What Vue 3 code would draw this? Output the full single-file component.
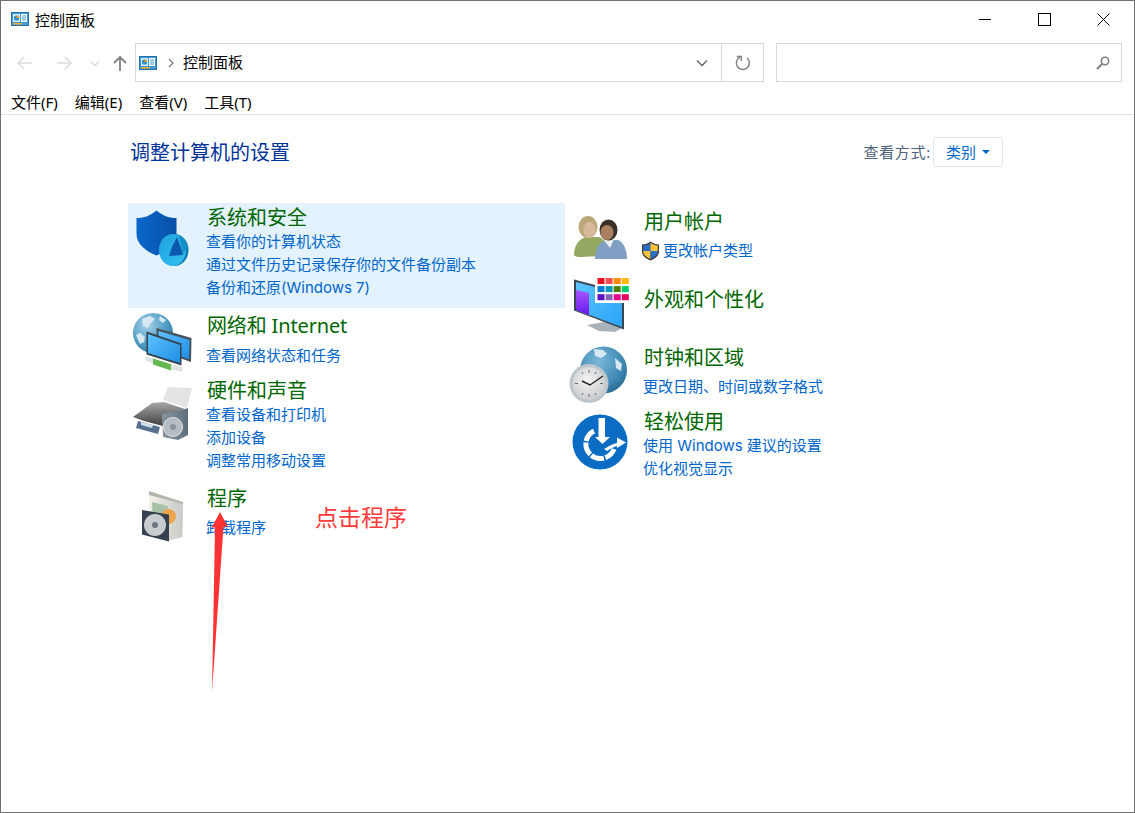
<template>
  <div class="window">
    <header class="titlebar">
      <svg class="panel-icon" width="18" height="14" viewBox="0 0 18 14">
        <rect x="0.5" y="0.5" width="17" height="13" fill="#3f9ad8" stroke="#2a6fa8" />
        <rect x="2" y="2" width="7" height="8" fill="#cfeafb" />
        <circle cx="5.5" cy="6" r="2.6" fill="#2f8fd0" />
        <path d="M5.5 6V3.4A2.6 2.6 0 0 1 8.1 6Z" fill="#f59b23" />
        <rect x="10" y="2" width="6" height="8" fill="#fff" />
        <path d="M11 4h4M11 6h4M11 8h4" stroke="#3f9ad8" />
        <rect x="2" y="11" width="9" height="1.5" fill="#f7a823" />
      </svg>
      <span class="title-text">控制面板</span>
      <div class="win-buttons">
        <svg width="60" height="14" viewBox="0 0 60 14"><path d="M1 6.5h12" stroke="#000" /></svg>
        <svg width="59" height="14" viewBox="0 0 59 14"><rect x="0.5" y="0.5" width="12" height="12" fill="none" stroke="#000" /></svg>
        <svg width="13" height="14" viewBox="0 0 13 14"><path d="M0.5 0.5l12 12M12.5 0.5l-12 12" stroke="#000" /></svg>
      </div>
    </header>

    <nav class="navbar">
      <div class="nav-buttons">
        <svg width="118" height="20" viewBox="0 0 118 20">
          <path d="M2 10h14M8 4l-6 6 6 6" fill="none" stroke="#dcdcdc" stroke-width="1.6" />
          <path d="M41 10h14M49 4l6 6-6 6" fill="none" stroke="#dcdcdc" stroke-width="1.6" />
          <path d="M75 8.5l4 4 4-4" fill="none" stroke="#dcdcdc" stroke-width="1.6" />
          <path d="M104 18V4M98 10l6-6 6 6" fill="none" stroke="#808080" stroke-width="1.8" />
        </svg>
      </div>
      <div class="address">
        <svg class="panel-icon small" width="18" height="14" viewBox="0 0 18 14">
          <rect x="0.5" y="0.5" width="17" height="13" fill="#3f9ad8" stroke="#2a6fa8" />
          <rect x="2" y="2" width="7" height="8" fill="#cfeafb" />
          <circle cx="5.5" cy="6" r="2.6" fill="#2f8fd0" />
          <path d="M5.5 6V3.4A2.6 2.6 0 0 1 8.1 6Z" fill="#f59b23" />
          <rect x="10" y="2" width="6" height="8" fill="#fff" />
          <path d="M11 4h4M11 6h4M11 8h4" stroke="#3f9ad8" />
          <rect x="2" y="11" width="9" height="1.5" fill="#f7a823" />
        </svg>
        <svg class="crumb" width="6" height="10" viewBox="0 0 6 10"><path d="M1 1l4 4-4 4" fill="none" stroke="#808080" stroke-width="1.4" /></svg>
        <span class="address-text">控制面板</span>
        <svg class="drop" width="12" height="8" viewBox="0 0 12 8"><path d="M1 1.5l5 5 5-5" fill="none" stroke="#707070" stroke-width="1.6" /></svg>
        <div class="refresh">
          <svg width="16" height="16" viewBox="0 0 16 16">
            <path d="M5 2.2A6.5 6.5 0 1 0 12 3" fill="none" stroke="#808080" stroke-width="1.5" />
            <path d="M1.8 1.5H6.3V6" fill="none" stroke="#808080" stroke-width="1.4" />
          </svg>
        </div>
      </div>
      <div class="search">
        <svg width="14" height="14" viewBox="0 0 14 14">
          <circle cx="9" cy="5" r="3.7" fill="none" stroke="#808080" stroke-width="1.6" />
          <path d="M6.3 7.7L1 13" stroke="#808080" stroke-width="2" />
        </svg>
      </div>
    </nav>

    <div class="menubar">
      <span v-for="m in menus" :key="m">{{ m }}</span>
    </div>

    <main class="content">
      <div class="head">
        <h1>调整计算机的设置</h1>
        <div class="view-by">
          <span class="view-label">查看方式:</span>
          <div class="view-btn">类别<i class="caret"></i></div>
        </div>
      </div>

      <div class="columns">
        <div v-for="(col, i) in columns" :key="i" class="col" :class="i ? 'right' : 'left'">
          <section v-for="cat in col" :key="cat.title" class="cat" :class="[cat.cls, { single: cat.links.length === 1 }]">
            <div class="icon-cell">
              <svg v-if="cat.icon === 'shield'" width="64" height="64" viewBox="132 206 64 64">
                <defs>
                  <linearGradient id="sh" x1="0" y1="0" x2="1" y2="0"><stop offset="0" stop-color="#0a66cc" /><stop offset="1" stop-color="#0851a6" /></linearGradient>
                  <linearGradient id="disc" x1="0" y1="0" x2="1" y2="1"><stop offset="0" stop-color="#1f9fe0" /><stop offset="1" stop-color="#35c3ee" /></linearGradient>
                </defs>
                <path d="M136.500 218c8 0 14-2.500 20-7.500 6 5 12 7.500 20 7.500v16c0 10-9 17-20 21.500-11-4.500-20-11.500-20-21.500Z" fill="url(#sh)" />
                <ellipse cx="174.500" cy="250" rx="14" ry="16" fill="#0c7ab2" />
                <ellipse cx="172.500" cy="250" rx="13.500" ry="16" fill="url(#disc)" />
                <path d="M177 237l4 11 2 7-14 1 3-9Z" fill="#0c58ac" />
                <path d="M179 235c4 2 8 7 8 13l-4 6Z" fill="#1490c8" />
              </svg>

              <svg v-else-if="cat.icon === 'network'" width="64" height="64" viewBox="130 311 64 64">
                <defs>
                  <radialGradient id="gl" cx="0.35" cy="0.3" r="0.8"><stop offset="0" stop-color="#a5d2e8" /><stop offset="0.6" stop-color="#4f9cc4" /><stop offset="1" stop-color="#2b6f98" /></radialGradient>
                  <linearGradient id="scr" x1="0" y1="0" x2="1" y2="1"><stop offset="0" stop-color="#5cc2ff" /><stop offset="1" stop-color="#1f8fe6" /></linearGradient>
                </defs>
                <circle cx="153" cy="333" r="20" fill="url(#gl)" />
                <path d="M142 319l8-3 5 3-4 4-3 5-5-2ZM160 316l6 4-3 3-4-3ZM136 335l4-2 5 4-1 5-4 2Z" fill="#d6e8f1" />
                <path d="M156.500 328l35 10-.5 24-34-12Z" fill="#46525c" />
                <path d="M158.500 331l31 9-.5 19-30-10Z" fill="url(#scr)" />
                <path d="M146.500 331.500l35 12v22l-35-11Z" fill="#36424c" />
                <path d="M148 334l32 11v18l-32-10Z" fill="url(#scr)" />
                <path d="M145 356l13 4 0 5-12-4Z" fill="#dfe5e2" />
                <path d="M153 358.500l19 6-1 6-18-6Z" fill="#63b84f" />
                <path d="M171 364l12 3-1 5-11-3Z" fill="#dfe5e2" />
              </svg>

              <svg v-else-if="cat.icon === 'printer'" width="64" height="64" viewBox="130 383 64 64">
                <defs>
                  <linearGradient id="pr" x1="0" y1="0" x2="0" y2="1"><stop offset="0" stop-color="#a8a8a8" /><stop offset="1" stop-color="#2e2e2e" /></linearGradient>
                  <linearGradient id="spk" x1="0" y1="0" x2="1" y2="0"><stop offset="0" stop-color="#8a97a3" /><stop offset="1" stop-color="#5d6d7b" /></linearGradient>
                </defs>
                <path d="M163 400l5-13 24 1-5 20Z" fill="#e4e4e4" />
                <path d="M133 417l19-14 12-1 24 8-10 20-34-9Z" fill="url(#pr)" />
                <path d="M138 421l22 6-2 7-22-6Z" fill="#56708e" />
                <path d="M141 422l12 3-1 3-11-3Z" fill="#cde0ea" />
                <path d="M162 414l15-2 11-4 0 27-10 5-15-3Z" fill="url(#spk)" />
                <circle cx="173" cy="427" r="9.500" fill="#b5bcc2" stroke="#dfe3e6" />
                <circle cx="173" cy="427" r="3" fill="#8a949c" />
              </svg>

              <svg v-else-if="cat.icon === 'box'" width="64" height="64" viewBox="132 487 64 64">
                <defs>
                  <linearGradient id="bx" x1="0" y1="0" x2="1" y2="0"><stop offset="0" stop-color="#f2f2ea" /><stop offset="1" stop-color="#c9c9c6" /></linearGradient>
                </defs>
                <path d="M149 491l34 11v6l-34-9Z" fill="#b5b5ae" />
                <path d="M149 495l34 9-.5 33-16 4-17-8Z" fill="url(#bx)" />
                <path d="M152 502l16 4-2 18-13-4Z" fill="#a6c2a6" />
                <circle cx="168.500" cy="516.500" r="7.500" fill="#eda54c" />
                <path d="M142 510l27 4.500v27l-27-7Z" fill="#35424e" />
                <circle cx="155" cy="525" r="11" fill="#c8ccce" />
                <circle cx="155" cy="525" r="3" fill="#6c7880" />
              </svg>

              <svg v-else-if="cat.icon === 'users'" width="64" height="64" viewBox="570 212 64 64">
                <path d="M574 255c0-9 5-17 13-18h12c5 2 8 6 8 12l-8 7-18 1c-4 0-7-1-7-2Z" fill="#93a860" />
                <ellipse cx="588" cy="227" rx="9.500" ry="11" fill="#bba878" />
                <ellipse cx="589.500" cy="230" rx="6" ry="8" fill="#d8b99c" />
                <path d="M595 259c0-11 5-17 11-19h12c5 2 9 9 9 19Z" fill="#7f9fc4" />
                <path d="M603 239l6-3 5 3-4 9Z" fill="#edf0f2" />
                <ellipse cx="608.500" cy="230" rx="9" ry="10.500" fill="#3b3028" />
                <ellipse cx="607" cy="232.500" rx="6.500" ry="7.500" fill="#a8805f" />
              </svg>

              <svg v-else-if="cat.icon === 'display'" width="64" height="64" viewBox="570 274 64 64">
                <defs>
                  <linearGradient id="mon" x1="0" y1="0" x2="1" y2="1"><stop offset="0" stop-color="#5cc4ff" /><stop offset="1" stop-color="#2aa3f8" /></linearGradient>
                  <linearGradient id="pur" x1="0" y1="0" x2="0" y2="1"><stop offset="0" stop-color="#a656ff" /><stop offset="1" stop-color="#6a1ae8" /></linearGradient>
                </defs>
                <path d="M604 322h9l1 6-9-1Z" fill="#b8c0c6" />
                <path d="M587 325l17-3 20 5-9 5-16-1Z" fill="#a9b2b8" />
                <path d="M574 279.500l50 13v37l-50-19Z" fill="#3b4650" />
                <path d="M576 282l46 12v33l-46-17Z" fill="url(#mon)" />
                <path d="M576 290l13 3v22l-13-5Z" fill="url(#pur)" />
                <rect x="595" y="276" width="34" height="27" fill="#fff" />
                <rect v-for="t in tiles" :key="t.k" :x="t.x" :y="t.y" width="7" height="6" :fill="t.c" />
              </svg>

              <svg v-else-if="cat.icon === 'clock'" width="64" height="64" viewBox="568 345 64 64">
                <defs>
                  <radialGradient id="gl2" cx="0.4" cy="0.3" r="0.85"><stop offset="0" stop-color="#7ab8d8" /><stop offset="0.6" stop-color="#3f8ab5" /><stop offset="1" stop-color="#1f5b85" /></radialGradient>
                  <radialGradient id="face" cx="0.45" cy="0.4" r="0.7"><stop offset="0" stop-color="#f4f4f4" /><stop offset="1" stop-color="#c2c6c8" /></radialGradient>
                </defs>
                <circle cx="603.500" cy="370" r="23.500" fill="url(#gl2)" />
                <path d="M594 349l9 1 4 4-6 4-6-2ZM615 358l7 6-1 7-5-3Z" fill="#d6e8f1" />
                <circle cx="589" cy="383.500" r="19.500" fill="#bcc5ca" />
                <circle cx="589" cy="383.500" r="16.500" fill="url(#face)" />
                <path d="M589 370v3M589 394v3M575 383.500h3M600 383.500h3M582 372l1 2M596 372l-1 2M582 395l1-2M596 395l-1-2" stroke="#6b6b6b" />
                <path d="M603 376l-13 9-8-4" fill="none" stroke="#222" stroke-width="1.400" />
              </svg>

              <svg v-else-if="cat.icon === 'ease'" width="64" height="64" viewBox="568 412 64 64">
                <circle cx="600" cy="442" r="27.500" fill="#0b6cc4" />
                <path d="M594 431A14.500 14.500 0 1 0 614 449" fill="none" stroke="#fff" stroke-width="5" stroke-dasharray="13 1.500 13 1.500 13 1.500 13" />
                <path d="M598.500 418h6.500v19h5l-7.500 7-7.500-7h3.500Z" fill="#fff" />
                <path d="M604 449l2-1c3-2 6-4 11-5v-5.500l9 5-9 5.500v-2c-4 1-7 3-10 5Z" fill="#fff" />
              </svg>
            </div>

            <div class="text">
              <h2>{{ cat.title }}</h2>
              <div class="links">
                <a v-for="l in cat.links" :key="l">
                  <svg v-if="cat.uac" class="uac" width="19" height="20" viewBox="0 0 19 20">
                    <path d="M9.500 0.500c2.500 2 5 3 8.500 3v7c0 4-3.500 7-8.500 9-5-2-8.500-5-8.500-9v-7c3.500 0 6-1 8.500-3Z" fill="#3a3a3a" />
                    <path d="M9.500 2v8H2.200V4.500c3 0 5-1 7.300-2.500Z" fill="#2a6fc2" />
                    <path d="M9.500 2c2.300 1.500 4.300 2.500 7.300 2.500V10H9.500Z" fill="#f8c33b" />
                    <path d="M2.200 10h7.300v8c-4-1.500-7.300-4-7.300-8Z" fill="#f8c33b" />
                    <path d="M9.500 10h7.300c0 4-3.300 6.500-7.300 8Z" fill="#2a6fc2" />
                  </svg>
                  {{ l }}
                </a>
              </div>
            </div>
          </section>
        </div>
      </div>

      <span class="note">点击程序</span>
      <svg class="arrow" width="20" height="182" viewBox="0 0 20 182">
        <path d="M10 0L18 15 13.500 14.500 2 180 5 15 1.500 16Z" fill="#ff3333" />
      </svg>
    </main>
  </div>
</template>

<script setup>
const menus = ['文件(F)', '编辑(E)', '查看(V)', '工具(T)']

const tileColors = [
  '#e81123', '#ff4d4f', '#ff8c00', '#ffb900',
  '#0078d7', '#0099bc', '#498205', '#00cc6a',
  '#5c0fc4', '#8764b8', '#e3008c', '#e3005c'
]
const tiles = tileColors.map((c, i) => ({
  k: i,
  c,
  x: 597.5 + (i % 4) * 8.1,
  y: 278 + Math.floor(i / 4) * 8.1
}))

const columns = [
  [
    { icon: 'shield', title: '系统和安全', cls: 'active', links: ['查看你的计算机状态', '通过文件历史记录保存你的文件备份副本', '备份和还原(Windows 7)'] },
    { icon: 'network', title: '网络和 Internet', cls: 'net', links: ['查看网络状态和任务'] },
    { icon: 'printer', title: '硬件和声音', links: ['查看设备和打印机', '添加设备', '调整常用移动设置'] },
    { icon: 'box', title: '程序', cls: 'programs', links: ['卸载程序'] }
  ],
  [
    { icon: 'users', title: '用户帐户', uac: true, links: ['更改帐户类型'] },
    { icon: 'display', title: '外观和个性化', cls: 'appearance', links: [] },
    { icon: 'clock', title: '时钟和区域', links: ['更改日期、时间或数字格式'] },
    { icon: 'ease', title: '轻松使用', links: ['使用 Windows 建议的设置', '优化视觉显示'] }
  ]
]
</script>

<style>
html, body {
  margin: 0;
  background: #fff;
}
</style>

<style scoped>
.window {
  box-sizing: border-box;
  width: 1135px;
  height: 813px;
  border: 1px solid #707070;
  background: #fff;
  display: flex;
  flex-direction: column;
  font-family: "Noto Sans", "Noto Sans CJK SC", sans-serif;
  color: #000;
  overflow: hidden;
}

.titlebar {
  height: 42px;
  flex: none;
  display: flex;
  align-items: flex-start;
  padding-left: 10px;
}
.titlebar .panel-icon {
  margin-top: 11px;
}
.title-text {
  margin: 8px 0 0 6px;
  font-size: 15px;
  line-height: 22px;
}
.win-buttons {
  margin-left: auto;
  margin-right: 24px;
  padding-top: 12px;
  display: flex;
}

.navbar {
  height: 39px;
  flex: none;
  display: flex;
  align-items: stretch;
}
.nav-buttons {
  width: 134px;
  padding: 10px 0 0 15px;
  box-sizing: border-box;
}
.address {
  width: 629px;
  box-sizing: border-box;
  border: 1px solid #d9d9d9;
  display: flex;
  align-items: center;
  padding-left: 3px;
}
.crumb {
  margin-left: 11px;
}
.address-text {
  margin: -1px 0 0 9px;
  font-size: 15px;
  line-height: 22px;
}
.drop {
  margin-left: auto;
  margin-right: 13px;
}
.refresh {
  width: 41px;
  align-self: stretch;
  border-left: 1px solid #d9d9d9;
  display: flex;
  align-items: center;
  justify-content: center;
}
.search {
  width: 346px;
  margin-left: 12px;
  box-sizing: border-box;
  border: 1px solid #d9d9d9;
  display: flex;
  align-items: center;
  justify-content: flex-end;
  padding-right: 11px;
}

.menubar {
  height: 33px;
  flex: none;
  box-sizing: border-box;
  border-bottom: 1px solid #e0e0e0;
  display: flex;
  align-items: center;
  gap: 17px;
  padding: 9px 0 2px 10px;
  font-size: 15px;
  line-height: 20px;
}

.content {
  flex: 1;
  position: relative;
  padding: 22px 131px 0 127px;
}

.head {
  display: flex;
  justify-content: space-between;
  align-items: center;
  height: 30px;
  padding-left: 3px;
}
h1 {
  margin: 0;
  margin-left: -1px;
  padding-top: 2px;
  font-size: 20px;
  line-height: 30px;
  font-weight: 400;
  color: #003399;
}
.view-by {
  display: flex;
  align-items: center;
  gap: 2px;
  font-size: 15px;
  color: #4c607a;
}
.view-label {
  letter-spacing: 0.7px;
  padding-bottom: 2px;
}
.view-btn {
  box-sizing: border-box;
  width: 70px;
  height: 30px;
  border: 1px solid #dfe9f3;
  border-radius: 2px;
  display: flex;
  align-items: center;
  padding: 0 0 2px 12px;
  color: #0066cc;
}
.caret {
  margin: 2px 0 0 6px;
  border-left: 4px solid transparent;
  border-right: 4px solid transparent;
  border-top: 4px solid #0066cc;
}

.columns {
  display: flex;
  margin-top: 36px;
}
.col.left {
  width: 437px;
}

.cat {
  display: flex;
  margin-top: 4px;
  padding-bottom: 5px;
}
.left .cat:first-child {
  margin-top: 0;
}
.cat.active {
  background: #e3f2fd;
  padding-bottom: 9px;
}
.cat.programs {
  margin-top: 7px;
}
.cat.appearance {
  min-height: 49px;
  padding-top: 14px;
}

.icon-cell {
  width: 79px;
  height: 0;
  flex: none;
}
.icon-cell svg {
  display: block;
}
.left .cat:nth-child(1) .icon-cell svg { margin: 3px 0 0 4px; }
.left .cat:nth-child(2) .icon-cell svg { margin: -1px 0 0 2px; }
.left .cat:nth-child(3) .icon-cell svg { margin: 7px 0 0 2px; }
.left .cat:nth-child(4) .icon-cell svg { margin: 3px 0 0 4px; }
.right .cat:nth-child(1) .icon-cell svg { margin: 5px 0 0 5px; }
.right .cat:nth-child(2) .icon-cell svg { margin: -11px 0 0 5px; }
.right .cat:nth-child(3) .icon-cell svg { margin: 2px 0 0 3px; }
.right .cat:nth-child(4) .icon-cell svg { margin: 5px 0 0 3px; }

h2 {
  margin: 0;
  padding-top: 1px;
  font-size: 20px;
  line-height: 28px;
  font-weight: 400;
  color: #006600;
}
.net h2 {
  padding-top: 0;
  letter-spacing: -0.15px;
}
.links {
  margin: -2px 0 0 -1px;
}
.single .links {
  margin-top: 3px;
}
.net .links {
  margin-top: 4px;
}
.links a {
  display: flex;
  align-items: center;
  font-family: Inter, "Noto Sans CJK SC", sans-serif;
  font-size: 15px;
  line-height: 23px;
  color: #0066cc;
}
.uac {
  margin: 0 3px 0 -2px;
}

.note {
  position: absolute;
  left: 314px;
  top: 385px;
  font-size: 23px;
  line-height: 34px;
  color: #ff3b3b;
}
.arrow {
  position: absolute;
  left: 209px;
  top: 397px;
}
</style>
